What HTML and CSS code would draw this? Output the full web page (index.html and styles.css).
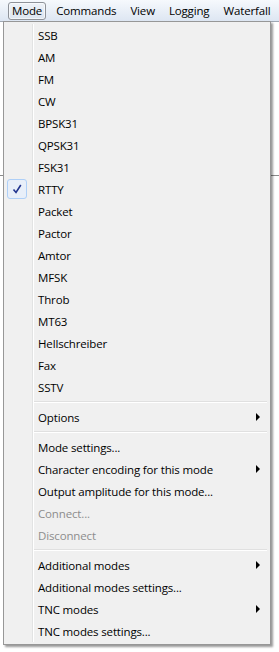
FILE: index.html
```html
<!DOCTYPE html>
<html lang="en">
<head>
    <meta charset="UTF-8">
    <meta name="viewport" content="width=device-width, initial-scale=1.0">
    <title>Mode menu</title>
    <link rel="stylesheet" href="styles.css">
</head>
<body>
    <div class="menubar">
        <span class="menubar-item open">Mode</span>
        <span class="menubar-item">Commands</span>
        <span class="menubar-item">View</span>
        <span class="menubar-item">Logging</span>
        <span class="menubar-item">Waterfall</span>
    </div>

    <div class="workspace">
        <div class="pane"></div>
    </div>

    <div class="popup">
        <div class="item">SSB</div>
        <div class="item">AM</div>
        <div class="item">FM</div>
        <div class="item">CW</div>
        <div class="item">BPSK31</div>
        <div class="item">QPSK31</div>
        <div class="item">FSK31</div>
        <div class="item">
            <span class="check">
                <svg width="10" height="10" viewBox="0 0 10 10"><path d="M1.5 5.5 L4 8.5 L8.8 1" fill="none" stroke="#22358f" stroke-width="1.6"/></svg>
            </span>
            RTTY
        </div>
        <div class="item">Packet</div>
        <div class="item">Pactor</div>
        <div class="item">Amtor</div>
        <div class="item">MFSK</div>
        <div class="item">Throb</div>
        <div class="item">MT63</div>
        <div class="item">Hellschreiber</div>
        <div class="item">Fax</div>
        <div class="item">SSTV</div>
        <div class="separator"></div>
        <div class="item submenu">Options</div>
        <div class="separator"></div>
        <div class="item">Mode settings...</div>
        <div class="item submenu">Character encoding for this mode</div>
        <div class="item">Output amplitude for this mode...</div>
        <div class="item disabled">Connect...</div>
        <div class="item disabled">Disconnect</div>
        <div class="separator"></div>
        <div class="item submenu">Additional modes</div>
        <div class="item">Additional modes settings...</div>
        <div class="item submenu">TNC modes</div>
        <div class="item">TNC modes settings...</div>
    </div>
</body>
</html>
```

FILE: styles.css
```css
body {
    margin: 0;
    background: #fff;
    font-family: "Open Sans", "Noto Sans", sans-serif;
    font-size: 11.5px;
    letter-spacing: -0.15px;
    color: #000;
    position: relative;
    height: 652px;
    overflow: hidden;
}
.menubar {
    height: 22px;
    display: flex;
    align-items: center;
    padding-left: 5px;
    background: linear-gradient(#f6f9fd, #dde6f2);
    border-bottom: 1px solid #a0a8b4;
    box-sizing: border-box;
}
.menubar-item {
    position: relative;
    height: 18px;
    line-height: 18px;
    padding: 0 7px;
    white-space: nowrap;
}
.menubar-item.open::before {
    content: "";
    position: absolute;
    left: 3px;
    right: 3px;
    top: 0;
    bottom: 0;
    z-index: -1;
    border: 1px solid #8e9299;
    border-radius: 3px;
    background: linear-gradient(#eef2f8, #dde5f0);
    box-shadow: inset 0 0 0 1px rgba(255, 255, 255, 0.6);
}
.menubar-item.open {
    z-index: 0;
}
.workspace {
    height: 153px;
    border-bottom: 1px solid #8a8a8a;
}
.pane {
    height: 100%;
}
.popup {
    position: absolute;
    left: 3px;
    top: 21px;
    width: 268px;
    padding: 2px;
    box-sizing: border-box;
    background: #f0f0f0;
    border: 1px solid #979797;
    box-shadow: 2px 2px 2px rgba(0, 0, 0, 0.4);
}
.popup::before {
    content: "";
    position: absolute;
    left: 28px;
    top: 2px;
    bottom: 2px;
    width: 1px;
    background: #e2e3e3;
    border-right: 1px solid #fff;
}
.item {
    position: relative;
    height: 22px;
    display: flex;
    align-items: center;
    padding-left: 32px;
    white-space: nowrap;
}
.item.disabled {
    color: #8d8d8d;
}
.item.submenu::after {
    content: "";
    margin-left: auto;
    margin-right: 8px;
    border-left: 4px solid #000;
    border-top: 4px solid transparent;
    border-bottom: 4px solid transparent;
}
.check {
    position: absolute;
    left: 1px;
    top: 1px;
    width: 20px;
    height: 20px;
    display: flex;
    align-items: center;
    justify-content: center;
    box-sizing: border-box;
    border: 1px solid #aecff7;
    border-radius: 3px;
    background: #e8eff9;
}
.separator {
    height: 8px;
    margin-left: 27px;
    margin-right: 1px;
    background: linear-gradient(transparent 3px, #e0e0e0 3px, #e0e0e0 4px, #fff 4px, #fff 5px, transparent 5px);
}
```
